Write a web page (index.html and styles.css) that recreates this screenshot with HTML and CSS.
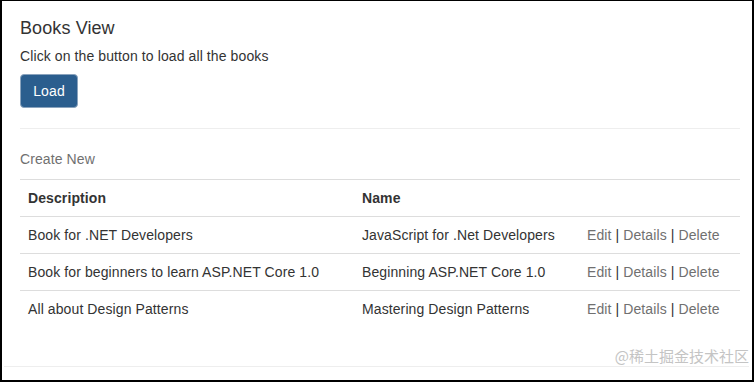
FILE: index.html
```html
<!DOCTYPE html>
<html lang="en">
<head>
  <meta charset="UTF-8">
  <meta name="viewport" content="width=device-width, initial-scale=1.0">
  <title>Books View</title>
  <link rel="stylesheet" href="styles.css">
</head>
<body>
  <div class="frame">
    <div class="container">
      <h3 class="title">Books View</h3>
      <p class="intro">Click on the button to load all the books</p>
      <button class="btn-load" type="button">Load</button>
      <hr class="divider">

      <p class="create"><a href="#">Create New</a></p>
      <table class="books">
        <thead>
          <tr>
            <th class="col-desc">Description</th>
            <th class="col-name">Name</th>
            <th class="col-actions"></th>
          </tr>
        </thead>
        <tbody>
          <tr>
            <td>Book for .NET Developers</td>
            <td>JavaScript for .Net Developers</td>
            <td><a href="#">Edit</a> | <a href="#">Details</a> | <a href="#">Delete</a></td>
          </tr>
          <tr>
            <td>Book for beginners to learn ASP.NET Core 1.0</td>
            <td>Beginning ASP.NET Core 1.0</td>
            <td><a href="#">Edit</a> | <a href="#">Details</a> | <a href="#">Delete</a></td>
          </tr>
          <tr>
            <td>All about Design Patterns</td>
            <td>Mastering Design Patterns</td>
            <td><a href="#">Edit</a> | <a href="#">Details</a> | <a href="#">Delete</a></td>
          </tr>
        </tbody>
      </table>
    </div>
    <hr class="footer-line">
    <!-- watermark from the screenshot source -->
    <span class="watermark">@稀土掘金技术社区</span>
  </div>
</body>
</html>
```

FILE: styles.css
```css
html, body {
  margin: 0;
  height: 100%;
}

body {
  font-family: "Liberation Sans", Arial, sans-serif;
  font-size: 14px;
  line-height: 20px;
  letter-spacing: 0.1px;
  color: #333;
  background-color: #fff;
}

.frame {
  position: relative;
  box-sizing: border-box;
  height: 382px;
  border-style: solid;
  border-color: #000;
  border-width: 1px 2px 2px 2px;
  overflow: hidden;
}

.container {
  padding: 17px 12px 0 18px;
}

.title {
  margin: 0 0 8px;
  font-size: 18px;
  font-weight: normal;
  line-height: 20px;
}

.intro {
  margin: 0 0 8px;
}

.btn-load {
  display: block;
  width: 58px;
  height: 34px;
  padding: 6px 12px;
  font-family: inherit;
  font-size: 14px;
  line-height: 20px;
  letter-spacing: 0.1px;
  color: #fff;
  background-color: #2b5e8e;
  border: 1px solid #8aa3bd;
  border-radius: 4px;
  cursor: pointer;
}

.divider {
  margin: 20px 0 20px;
  border: 0;
  border-top: 1px solid #eee;
}

.create {
  margin: 0 0 10px;
}

a {
  color: #707070;
  text-decoration: none;
}

.books {
  width: 100%;
  border-collapse: collapse;
  border-spacing: 0;
}

.books th,
.books td {
  padding: 8px;
  text-align: left;
  border-top: 1px solid #ddd;
  line-height: 20px;
  vertical-align: top;
}

.books th {
  font-weight: bold;
}

.col-desc {
  width: 318px;
}

.col-name {
  width: 209px;
}

.footer-line {
  margin: 39px 3px 0 2px;
  border: 0;
  border-top: 1px solid #eee;
}

.watermark {
  position: absolute;
  right: 3px;
  bottom: 15px;
  font-family: "Noto Sans CJK SC", sans-serif;
  font-size: 15px;
  line-height: 18px;
  letter-spacing: 0;
  color: #c4c4c4;
}
```
